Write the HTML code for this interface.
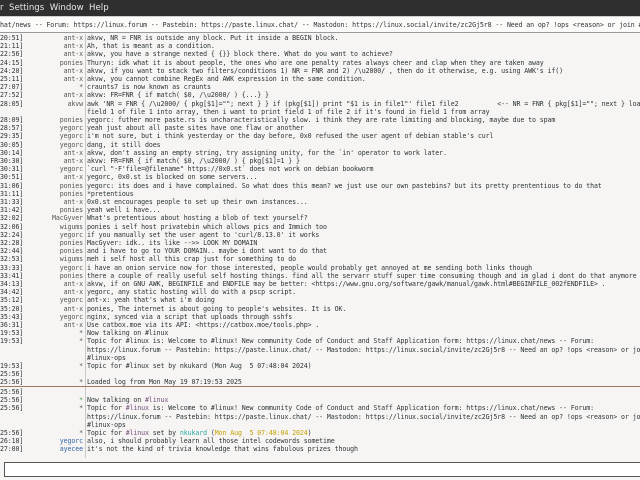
<!DOCTYPE html>
<html><head><meta charset="utf-8"><style>
html,body{margin:0;padding:0;width:640px;height:480px;overflow:hidden;background:#f6f5f4;}
body{position:relative;font-family:"DejaVu Sans Mono","Liberation Mono",monospace;}
#menu{position:absolute;left:0;top:0;width:640px;height:16px;background:#2f2f2f;color:#e8e8e8;font-family:"DejaVu Sans","Liberation Sans",sans-serif;font-size:8.6px;line-height:16px;white-space:pre;}
#topic{position:absolute;left:0;top:16px;width:640px;height:15px;background:#fbfbfa;border-top:1px solid #cfcfcf;border-bottom:1px solid #9a9a9a;font-size:6.6px;letter-spacing:-0.1px;line-height:16px;color:#2e3436;white-space:pre;overflow:hidden;}
#log{position:absolute;left:0;top:34px;width:640px;height:424px;overflow:hidden;}
.r{position:absolute;left:0;height:8.2px;width:640px;font-size:6.6px;letter-spacing:-0.1px;line-height:8.2px;color:#2e3436;white-space:pre;}
.t{position:absolute;left:0;}
.n{position:absolute;right:557px;text-align:right;color:#555;}
.m{position:absolute;left:87px;}
#sep{position:absolute;left:85px;top:34px;width:1px;height:256px;background:#c8c8c8;}
#sep2{position:absolute;left:85px;top:290px;width:1px;height:168px;background:#c8c8c8;}
#mark{position:absolute;left:0;top:386px;width:640px;height:1px;background:#a07860;}
#input{position:absolute;left:4px;top:462px;width:640px;height:13px;background:#fff;border:1px solid #555;border-right:none;}
.b{color:#3465a4}.p{color:#75507b}.g{color:#4aa04a}.c{color:#2ea8a0}.y{color:#c4a000}
</style></head><body>
<div id="menu">r  Settings  Window  Help</div>
<div id="topic">hat/news -- Forum: https://linux.forum -- Pastebin: https://paste.linux.chat/ -- Mastodon: https://linux.social/invite/zc2Gj5r8 -- Need an op? !ops &lt;reason&gt; or join #linux-ops</div>
<div id="sep"></div><div id="sep2"></div>
<div id="log">
<div class="r" style="top:0px"><span class="t">20:51]</span><span class="n">ant-x</span><span class="m">akvw, NR = FNR is outside any block. Put it inside a BEGIN block.</span></div>
<div class="r" style="top:8.2px"><span class="t">21:11]</span><span class="n">ant-x</span><span class="m">Ah, that is meant as a condition.</span></div>
<div class="r" style="top:16.4px"><span class="t">22:56]</span><span class="n">ant-x</span><span class="m">akvw, you have a strange nexted { {}} block there. What do you want to achieve?</span></div>
<div class="r" style="top:24.6px"><span class="t">24:15]</span><span class="n">ponies</span><span class="m">Thuryn: idk what it is about people, the ones who are one penalty rates always cheer and clap when they are taken away</span></div>
<div class="r" style="top:32.8px"><span class="t">24:20]</span><span class="n">ant-x</span><span class="m">akvw, if you want to stack two filters/conditions 1) NR = FNR and 2) /\u2000/ , then do it otherwise, e.g. using AWK's if()</span></div>
<div class="r" style="top:41px"><span class="t">25:11]</span><span class="n">ant-x</span><span class="m">akvw, you cannot combine RegEx and AWK expression in the same condition.</span></div>
<div class="r" style="top:49.2px"><span class="t">27:07]</span><span class="n">*</span><span class="m">craunts7 is now known as craunts</span></div>
<div class="r" style="top:57.4px"><span class="t">27:52]</span><span class="n">ant-x</span><span class="m">akvw: FR=FNR { if match( $0, /\u2000/ ) {...} }</span></div>
<div class="r" style="top:65.6px"><span class="t">28:05]</span><span class="n">akvw</span><span class="m">awk 'NR = FNR { /\u2000/ { pkg[$1]=""; next } } if (pkg[$1]) print "$1 is in file1"' file1 file2          &lt;-- NR = FNR { pkg[$1]=""; next } load</span></div>
<div class="r" style="top:73.8px"><span class="m">field 1 of file 1 into array, then i want to print field 1 of file 2 if it's found in field 1 from array</span></div>
<div class="r" style="top:82px"><span class="t">28:09]</span><span class="n">ponies</span><span class="m">yegorc: futher more paste.rs is uncharacteristically slow. i think they are rate limiting and blocking, maybe due to spam</span></div>
<div class="r" style="top:90.2px"><span class="t">28:57]</span><span class="n">yegorc</span><span class="m">yeah just about all paste sites have one flaw or another</span></div>
<div class="r" style="top:98.4px"><span class="t">29:35]</span><span class="n">yegorc</span><span class="m">i'm not sure, but i think yesterday or the day before, 0x0 refused the user agent of debian stable's curl</span></div>
<div class="r" style="top:106.6px"><span class="t">30:05]</span><span class="n">yegorc</span><span class="m">dang, it still does</span></div>
<div class="r" style="top:114.8px"><span class="t">30:14]</span><span class="n">ant-x</span><span class="m">akvw, don't assing an empty string, try assigning unity, for the `in' operator to work later.</span></div>
<div class="r" style="top:123px"><span class="t">30:30]</span><span class="n">ant-x</span><span class="m">akvw: FR=FNR { if match( $0, /\u2000/ ) { pkg[$1]=1 } }</span></div>
<div class="r" style="top:131.2px"><span class="t">30:31]</span><span class="n">yegorc</span><span class="m">`curl "-F'file=@filename" https://0x0.st` does not work on debian bookworm</span></div>
<div class="r" style="top:139.4px"><span class="t">30:51]</span><span class="n">ant-x</span><span class="m">yegorc, 0x0.st is blocked on some servers...</span></div>
<div class="r" style="top:147.6px"><span class="t">31:06]</span><span class="n">ponies</span><span class="m">yegorc: its does and i have complained. So what does this mean? we just use our own pastebins? but its pretty prententious to do that</span></div>
<div class="r" style="top:155.8px"><span class="t">31:11]</span><span class="n">ponies</span><span class="m">*pretentious</span></div>
<div class="r" style="top:164px"><span class="t">31:33]</span><span class="n">ant-x</span><span class="m">0x0.st encourages people to set up their own instances...</span></div>
<div class="r" style="top:172.2px"><span class="t">31:42]</span><span class="n">ponies</span><span class="m">yeah well i have...</span></div>
<div class="r" style="top:180.4px"><span class="t">32:02]</span><span class="n">MacGyver</span><span class="m">What's pretentious about hosting a blob of text yourself?</span></div>
<div class="r" style="top:188.6px"><span class="t">32:06]</span><span class="n">wigums</span><span class="m">ponies i self host privatebin which allows pics and Immich too</span></div>
<div class="r" style="top:196.8px"><span class="t">32:24]</span><span class="n">yegorc</span><span class="m">if you manually set the user agent to 'curl/8.13.0' it works</span></div>
<div class="r" style="top:205px"><span class="t">32:28]</span><span class="n">ponies</span><span class="m">MacGyver: idk.. its like -->> LOOK MY DOMAIN</span></div>
<div class="r" style="top:213.2px"><span class="t">32:44]</span><span class="n">ponies</span><span class="m">and i have to go to YOUR DOMAIN.. maybe i dont want to do that</span></div>
<div class="r" style="top:221.4px"><span class="t">32:53]</span><span class="n">wigums</span><span class="m">meh i self host all this crap just for something to do</span></div>
<div class="r" style="top:229.6px"><span class="t">33:33]</span><span class="n">yegorc</span><span class="m">i have an onion service now for those interested, people would probably get annoyed at me sending both links though</span></div>
<div class="r" style="top:237.8px"><span class="t">33:41]</span><span class="n">ponies</span><span class="m">there a couple of really useful self hosting things. find all the servarr stuff super time consuming though and im glad i dont do that anymore</span></div>
<div class="r" style="top:246px"><span class="t">34:13]</span><span class="n">ant-x</span><span class="m">akvw, if on GNU AWK, BEGINFILE and ENDFILE may be better: &lt;https://www.gnu.org/software/gawk/manual/gawk.html#BEGINFILE_002fENDFILE&gt; .</span></div>
<div class="r" style="top:254.2px"><span class="t">34:42]</span><span class="n">ant-x</span><span class="m">yegorc, any static hosting will do with a pscp script.</span></div>
<div class="r" style="top:262.4px"><span class="t">35:12]</span><span class="n">yegorc</span><span class="m">ant-x: yeah that's what i'm doing</span></div>
<div class="r" style="top:270.6px"><span class="t">35:20]</span><span class="n">ant-x</span><span class="m">ponies, The internet is about going to people's websites. It is OK.</span></div>
<div class="r" style="top:278.8px"><span class="t">35:43]</span><span class="n">yegorc</span><span class="m">nginx, synced via a script that uploads through sshfs</span></div>
<div class="r" style="top:287px"><span class="t">36:31]</span><span class="n">ant-x</span><span class="m">Use catbox.moe via its API: &lt;https://catbox.moe/tools.php&gt; .</span></div>
<div class="r" style="top:295.2px"><span class="t">19:53]</span><span class="n">*</span><span class="m">Now talking on #linux</span></div>
<div class="r" style="top:303.4px"><span class="t">19:53]</span><span class="n">*</span><span class="m">Topic for #linux is: Welcome to #linux! New community Code of Conduct and Staff Application form: https://linux.chat/news -- Forum:</span></div>
<div class="r" style="top:311.6px"><span class="m">https://linux.forum -- Pastebin: https://paste.linux.chat/ -- Mastodon: https://linux.social/invite/zc2Gj5r8 -- Need an op? !ops &lt;reason&gt; or join</span></div>
<div class="r" style="top:319.8px"><span class="m">#linux-ops</span></div>
<div class="r" style="top:328px"><span class="t">19:53]</span><span class="n">*</span><span class="m">Topic for #linux set by nkukard (Mon Aug  5 07:48:04 2024)</span></div>
<div class="r" style="top:336.2px"><span class="t">25:56]</span></div>
<div class="r" style="top:344.4px"><span class="t">25:56]</span><span class="n">*</span><span class="m">Loaded log from Mon May 19 07:19:53 2025</span></div>
<div class="r" style="top:354px"><span class="t">25:56]</span></div>
<div class="r" style="top:362.2px"><span class="t">25:56]</span><span class="n g">*</span><span class="m">Now talking on <span class="p">#linux</span></span></div>
<div class="r" style="top:370.4px"><span class="t">25:56]</span><span class="n">*</span><span class="m">Topic for <span class="p">#linux</span> is: Welcome to #linux! New community Code of Conduct and Staff Application form: https://linux.chat/news -- Forum:</span></div>
<div class="r" style="top:378.6px"><span class="m">https://linux.forum -- Pastebin: https://paste.linux.chat/ -- Mastodon: https://linux.social/invite/zc2Gj5r8 -- Need an op? !ops &lt;reason&gt; or join</span></div>
<div class="r" style="top:386.8px"><span class="m">#linux-ops</span></div>
<div class="r" style="top:395px"><span class="t">25:56]</span><span class="n">*</span><span class="m">Topic for <span class="p">#linux</span> set by <span class="c">nkukard</span> (<span class="y">Mon Aug  5 07:48:04 2024</span>)</span></div>
<div class="r" style="top:403.2px"><span class="t">26:18]</span><span class="n b">yegorc</span><span class="m">also, i should probably learn all those intel codewords sometime</span></div>
<div class="r" style="top:411.4px"><span class="t">27:00]</span><span class="n b">ayecee</span><span class="m">it's not the kind of trivia knowledge that wins fabulous prizes though</span></div>
</div>
<div id="mark"></div>
<div id="input"></div>
</body></html>
